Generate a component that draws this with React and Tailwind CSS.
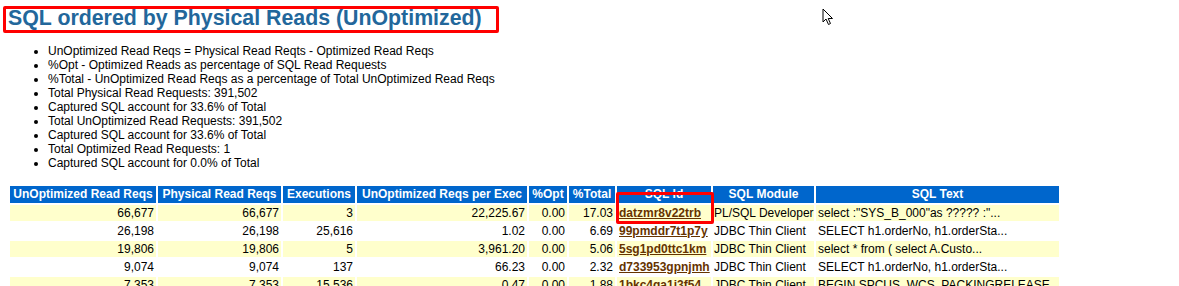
import React from "react";

const notes = [
  "UnOptimized Read Reqs = Physical Read Reqts - Optimized Read Reqs",
  "%Opt - Optimized Reads as percentage of SQL Read Requests",
  "%Total - UnOptimized Read Reqs as a percentage of Total UnOptimized Read Reqs",
  "Total Physical Read Requests: 391,502",
  "Captured SQL account for 33.6% of Total",
  "Total UnOptimized Read Requests: 391,502",
  "Captured SQL account for 33.6% of Total",
  "Total Optimized Read Requests: 1",
  "Captured SQL account for 0.0% of Total",
];

const cols = [
  { label: "UnOptimized Read Reqs", w: "w-[146px]" },
  { label: "Physical Read Reqs", w: "w-[123px]" },
  { label: "Executions", w: "w-[72px]" },
  { label: "UnOptimized Reqs per Exec", w: "w-[170px]" },
  { label: "%Opt", w: "w-[38px]" },
  { label: "%Total", w: "w-[46px]" },
  { label: "SQL Id", w: "w-[94px]" },
  { label: "SQL Module", w: "w-[101px]" },
  { label: "SQL Text", w: "w-[243px]" },
];

const rows = [
  ["66,677", "66,677", "3", "22,225.67", "0.00", "17.03", "datzmr8v22trb", "PL/SQL Developer", 'select :"SYS_B_000"as ????? :"...'],
  ["26,198", "26,198", "25,616", "1.02", "0.00", "6.69", "99pmddr7t1p7y", "JDBC Thin Client", "SELECT h1.orderNo, h1.orderSta..."],
  ["19,806", "19,806", "5", "3,961.20", "0.00", "5.06", "5sg1pd0ttc1km", "JDBC Thin Client", "select * from ( select A.Custo..."],
  ["9,074", "9,074", "137", "66.23", "0.00", "2.32", "d733953gpnjmh", "JDBC Thin Client", "SELECT h1.orderNo, h1.orderSta..."],
  ["7,353", "7,353", "15,536", "0.47", "0.00", "1.88", "1bkc4qa1j3f54", "JDBC Thin Client", "BEGIN SPCUS_WCS_PACKINGRELEASE..."],
];

const Pointer = () => (
  <svg width="14" height="18" viewBox="0 0 14 18" className="absolute left-[822px] top-[8px]">
    <path
      d="M1 1 L1 14 L4 11 L6.5 16.5 L8.5 15.5 L6.2 10.5 L10.5 10.5 Z"
      fill="white"
      stroke="black"
      strokeWidth="1"
      strokeLinejoin="miter"
    />
  </svg>
);

export default function App() {
  return (
    <div className="relative h-[286px] overflow-hidden bg-white px-2 font-['Liberation_Sans',Arial,sans-serif] text-black">
      <h3 className="pt-[6px] text-[21.33px] font-bold leading-[24px] text-[#22679b]">
        SQL ordered by Physical Reads (UnOptimized)
      </h3>
      <ul className="mt-[14px] list-disc pl-[40px] text-[12px] leading-[14px]">
        {notes.map((n, i) => (
          <li key={i}>{n}</li>
        ))}
      </ul>
      <table className="mt-[14px] w-[1053px] table-fixed border-separate border-spacing-[2px] text-[12px] leading-[16px]">
        <thead>
          <tr>
            {cols.map((c) => (
              <th
                key={c.label}
                className={`${c.w} h-[17px] whitespace-nowrap bg-[#0066CC] px-[2px] pb-[1px] text-center font-bold text-white`}
              >
                {c.label}
              </th>
            ))}
          </tr>
        </thead>
        <tbody>
          {rows.map((r, i) => {
            const bg = i % 2 === 0 ? "bg-[#FFFFCC]" : "bg-white";
            return (
              <tr key={i}>
                {r.map((v, j) => {
                  if (j === 6) {
                    return (
                      <td key={j} className={`${bg} h-[16px] whitespace-nowrap px-[2px] text-left align-top`}>
                        <a className="font-bold text-[#663300] underline">{v}</a>
                      </td>
                    );
                  }
                  const align = j < 6 ? "text-right" : "text-left";
                  const pad = j === 7 ? "pl-[1px] pr-0" : "px-[2px]";
                  return (
                    <td key={j} className={`${bg} ${align} ${pad} h-[16px] overflow-visible whitespace-nowrap align-top`}>
                      {v}
                    </td>
                  );
                })}
              </tr>
            );
          })}
        </tbody>
      </table>

      {/* red marks drawn over the screenshot */}
      <div className="pointer-events-none absolute left-[3px] top-[6px] h-[27px] w-[496px] rounded-[2px] border-[3px] border-[#ff0000]" />
      <div className="pointer-events-none absolute left-[616px] top-[192px] h-[32px] w-[98px] rounded-[2px] border-[3px] border-[#ff0000]" />
      <Pointer />
    </div>
  );
}
